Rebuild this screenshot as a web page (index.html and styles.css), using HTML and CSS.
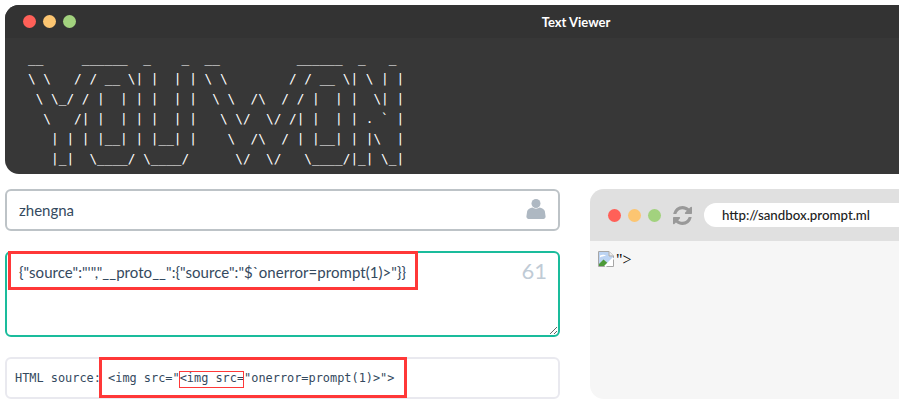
FILE: index.html
```
<!DOCTYPE html>
<html lang="en">
<head>
<meta charset="utf-8">
<title>Text Viewer</title>
<link rel="stylesheet" href="styles.css">
</head>
<body>
<div class="page">
  <section class="terminal">
    <header class="titlebar">
      <div class="dots"><i class="dot red"></i><i class="dot amber"></i><i class="dot green"></i></div>
      <h1 class="title">Text Viewer</h1>
    </header>
    <pre class="ascii">__     ______  _    _  __          ______  _   _
\ \   / / __ \| |  | | \ \        / / __ \| \ | |
 \ \_/ / |  | | |  | |  \ \  /\  / / |  | |  \| |
  \   /| |  | | |  | |   \ \/  \/ /| |  | | . ` |
   | | | |__| | |__| |    \  /\  / | |__| | |\  |
   |_|  \____/ \____/      \/  \/   \____/|_| \_|</pre>
  </section>
  <div class="columns">
    <div class="left">
      <div class="field">
        <input class="name" type="text" value="zhengna" readonly>
        <svg class="user" viewBox="0 0 20 20" width="20" height="20" aria-hidden="true"><circle cx="10" cy="4.500" r="4.500"/><path d="M6.500 8.500 C4 9 2 10 1.200 12 L.4 17.500 C.4 19 1.500 20 2.500 20 L17.500 20 C18.500 20 19.600 19 19.600 17.500 L18.800 12 C18 10 16 9 13.500 8.500 C12 10 8 10 6.500 8.500 Z"/></svg>
      </div>
      <div class="field">
        <textarea class="json" readonly>{"source":"'","__proto__":{"source":"$`onerror=prompt(1)>"}}</textarea>
        <span class="count">61</span>
        <span class="mark mark-json"></span>
      </div>
      <div class="field source">
        <code class="code">HTML source: &lt;img src="<span class="inner">&lt;img src=</span>"onerror=prompt(1)&gt;"&gt;</code>
        <span class="mark mark-source"></span>
      </div>
    </div>
    <section class="browser">
      <header class="chrome">
        <div class="dots"><i class="dot red"></i><i class="dot amber"></i><i class="dot green"></i></div>
        <svg class="reload" viewBox="128 128 1536 1536" width="19" height="19" aria-hidden="true"><path d="M1639 1056q0 5-1 7-64 268-268 434.5t-478 166.5q-146 0-282.5-55t-243.5-157l-129 129q-19 19-45 19t-45-19-19-45v-448q0-26 19-45t45-19h448q26 0 45 19t19 45-19 45l-137 137q71 66 161 102t187 36q134 0 250-65t186-179q11-17 53-117 8-23 30-23h192q13 0 22.5 9.5t9.5 22.5zm25-800v448q0 26-19 45t-45 19h-448q-26 0-45-19t-19-45 19-45l138-138q-148-137-349-137-134 0-250 65t-186 179q-11 17-53 117-8 23-30 23h-199q-13 0-22.500-9.500t-9.500-22.500v-7q65-268 270-434.500t480-166.500q146 0 284 55.500t245 156.500l130-129q19-19 45-19t45 19 19 45z"/></svg>
        <div class="url">http://sandbox.prompt.ml</div>
      </header>
      <div class="view">
        <svg class="broken" viewBox="0 0 16 16" width="16" height="16" aria-hidden="true"><path d="M.5.5H11L15.500 5V15.500H.5Z" fill="#fff" stroke="#a6a6a6"/><path d="M1 1H10.800V5.200H15V8L8 15H1Z" fill="#bcd4f4"/><path d="M2 4.500C4 3.200 7 3.500 8 5 5.500 5 3.500 5.500 2 6.500Z" fill="#fff"/><path d="M1 13L5.500 8.500 9.500 12 6.500 15H1Z" fill="#4c9a38"/><path d="M7 15.500L15.500 7" stroke="#fff" stroke-width="2"/><path d="M11 .5V5H15.500" fill="#ececec" stroke="#a6a6a6"/></svg>
        <span class="after">"&gt;</span>
      </div>
    </section>
  </div>
  <span class="mark mark-inner"></span>
</div>
</body>
</html>
```
FILE: styles.css
```
html, body {
  margin: 0;
  height: 403px;
  overflow: hidden;
  background: #fff;
}
.page {
  position: relative;
  box-sizing: border-box;
  width: 899px;
  padding: 5px 0 0 5px;
  font-family: "Lato", sans-serif;
}
.terminal {
  height: 169px;
  background: #373737;
  border-radius: 14px 0 0 14px;
  overflow: hidden;
}
.titlebar {
  position: relative;
  display: flex;
  align-items: center;
  justify-content: center;
  height: 33px;
  padding-left: 248px;
  background: #333;
}
.titlebar .dots {
  position: absolute;
  left: 18px;
  top: 10px;
}
.dots {
  display: flex;
  gap: 7px;
}
.dot {
  display: block;
  width: 13px;
  height: 13px;
  border-radius: 50%;
}
.red { background: #ff6058; }
.amber { background: #fcc571; }
.green { background: #a2d27e; }
.title {
  margin: 0;
  color: #fff;
  font-size: 13px;
  font-weight: 700;
}
.ascii {
  margin: 11px 0 0 23px;
  color: #fff;
  font-family: "DejaVu Sans Mono", monospace;
  font-size: 12.75px;
  line-height: 20px;
}
.columns {
  display: grid;
  grid-template-columns: 555px 1fr;
  column-gap: 30px;
  margin-top: 15px;
}
.left {
  display: flex;
  flex-direction: column;
  gap: 20px;
}
.field {
  position: relative;
  display: flex;
}
.name, .json {
  box-sizing: border-box;
  width: 100%;
  margin: 0;
  outline: none;
  background: #fff;
  border-radius: 6px;
  color: #34495e;
  font-family: "Lato", sans-serif;
  font-size: 15px;
}
.name {
  height: 42px;
  padding: 0 12px;
  border: 2px solid #bdc3c7;
}
.user {
  position: absolute;
  right: 14px;
  top: 10px;
  fill: #aeb8c2;
}
.json {
  display: block;
  height: 86px;
  padding: 9px 12px;
  border: 2px solid #1abc9c;
  letter-spacing: 0.05px;
  line-height: 20px;
}
.count {
  position: absolute;
  right: 13px;
  top: 5px;
  color: #bfcbd6;
  font-size: 22px;
  line-height: 30px;
}
.source {
  box-sizing: border-box;
  align-items: center;
  height: 42px;
  padding: 0 8px;
  border: 2px solid #e9e9ef;
  border-radius: 6px;
}
.code {
  color: #34495e;
  font-family: "DejaVu Sans Mono", monospace;
  font-size: 11.9px;
  white-space: pre;
}
.mark {
  position: absolute;
  box-sizing: border-box;
  border: 3px solid #ff3838;
}
.mark-json {
  left: 3px;
  top: 0;
  width: 410px;
  height: 39px;
}
.mark-source {
  left: 92px;
  top: -2px;
  width: 308px;
  height: 41px;
}
.mark-inner {
  left: 179px;
  top: 371px;
  width: 65px;
  height: 17px;
  border-width: 1px;
}
.browser {
  height: 210px;
  background: #f6f6f6;
  border-radius: 14px 0 0 14px;
  overflow: hidden;
}
.chrome {
  display: flex;
  align-items: center;
  height: 52px;
  padding-left: 18px;
  background: #e0e0e0;
}
.reload {
  margin-left: 12px;
  fill: #999;
}
.url {
  flex: 1;
  box-sizing: border-box;
  height: 24px;
  margin-left: 12px;
  padding-left: 18px;
  background: #fff;
  border-radius: 12px 0 0 12px;
  color: #222;
  font-size: 13.3px;
  font-weight: 500;
  line-height: 24px;
}
.view {
  display: flex;
  padding: 10px 8px;
}
.after {
  margin-left: 2px;
  color: #000;
  font-family: "Liberation Serif", serif;
  font-size: 16px;
  line-height: 18px;
}
```
